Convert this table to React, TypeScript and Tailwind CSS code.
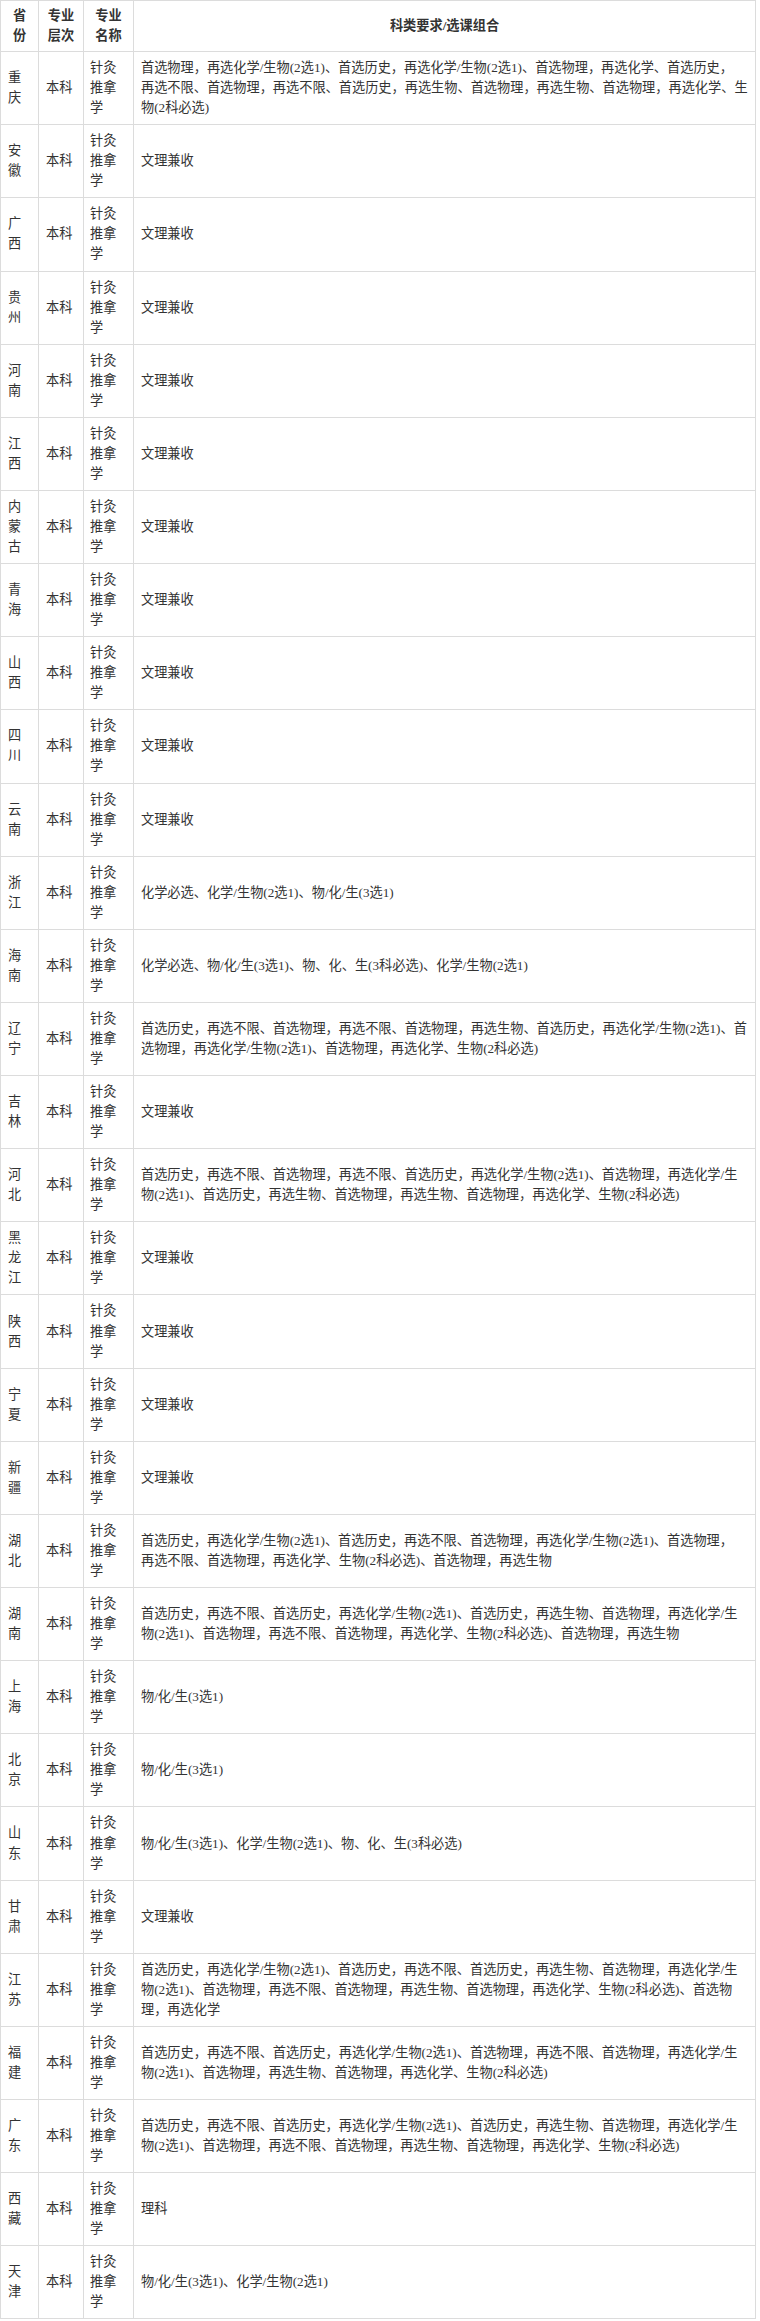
import React from "react";

interface Row {
  province: string;
  lines: string[];
}

const ALL = ["文理兼收"];

const rows: Row[] = [
  {
    province: "重庆",
    lines: [
      "首选物理，再选化学/生物(2选1)、首选历史，再选化学/生物(2选1)、首选物理，再选化学、首选历史，",
      "再选不限、首选物理，再选不限、首选历史，再选生物、首选物理，再选生物、首选物理，再选化学、生",
      "物(2科必选)",
    ],
  },
  { province: "安徽", lines: ALL },
  { province: "广西", lines: ALL },
  { province: "贵州", lines: ALL },
  { province: "河南", lines: ALL },
  { province: "江西", lines: ALL },
  { province: "内蒙古", lines: ALL },
  { province: "青海", lines: ALL },
  { province: "山西", lines: ALL },
  { province: "四川", lines: ALL },
  { province: "云南", lines: ALL },
  { province: "浙江", lines: ["化学必选、化学/生物(2选1)、物/化/生(3选1)"] },
  { province: "海南", lines: ["化学必选、物/化/生(3选1)、物、化、生(3科必选)、化学/生物(2选1)"] },
  {
    province: "辽宁",
    lines: [
      "首选历史，再选不限、首选物理，再选不限、首选物理，再选生物、首选历史，再选化学/生物(2选1)、首",
      "选物理，再选化学/生物(2选1)、首选物理，再选化学、生物(2科必选)",
    ],
  },
  { province: "吉林", lines: ALL },
  {
    province: "河北",
    lines: [
      "首选历史，再选不限、首选物理，再选不限、首选历史，再选化学/生物(2选1)、首选物理，再选化学/生",
      "物(2选1)、首选历史，再选生物、首选物理，再选生物、首选物理，再选化学、生物(2科必选)",
    ],
  },
  { province: "黑龙江", lines: ALL },
  { province: "陕西", lines: ALL },
  { province: "宁夏", lines: ALL },
  { province: "新疆", lines: ALL },
  {
    province: "湖北",
    lines: [
      "首选历史，再选化学/生物(2选1)、首选历史，再选不限、首选物理，再选化学/生物(2选1)、首选物理，",
      "再选不限、首选物理，再选化学、生物(2科必选)、首选物理，再选生物",
    ],
  },
  {
    province: "湖南",
    lines: [
      "首选历史，再选不限、首选历史，再选化学/生物(2选1)、首选历史，再选生物、首选物理，再选化学/生",
      "物(2选1)、首选物理，再选不限、首选物理，再选化学、生物(2科必选)、首选物理，再选生物",
    ],
  },
  { province: "上海", lines: ["物/化/生(3选1)"] },
  { province: "北京", lines: ["物/化/生(3选1)"] },
  { province: "山东", lines: ["物/化/生(3选1)、化学/生物(2选1)、物、化、生(3科必选)"] },
  { province: "甘肃", lines: ALL },
  {
    province: "江苏",
    lines: [
      "首选历史，再选化学/生物(2选1)、首选历史，再选不限、首选历史，再选生物、首选物理，再选化学/生",
      "物(2选1)、首选物理，再选不限、首选物理，再选生物、首选物理，再选化学、生物(2科必选)、首选物",
      "理，再选化学",
    ],
  },
  {
    province: "福建",
    lines: [
      "首选历史，再选不限、首选历史，再选化学/生物(2选1)、首选物理，再选不限、首选物理，再选化学/生",
      "物(2选1)、首选物理，再选生物、首选物理，再选化学、生物(2科必选)",
    ],
  },
  {
    province: "广东",
    lines: [
      "首选历史，再选不限、首选历史，再选化学/生物(2选1)、首选历史，再选生物、首选物理，再选化学/生",
      "物(2选1)、首选物理，再选不限、首选物理，再选生物、首选物理，再选化学、生物(2科必选)",
    ],
  },
  { province: "西藏", lines: ["理科"] },
  { province: "天津", lines: ["物/化/生(3选1)、化学/生物(2选1)"] },
];

export default function App() {
  return (
    <div className="bg-white w-[760px] min-h-[2321px]">
      <table className="w-[756px] table-fixed border-collapse text-[13.2px] leading-[20.05px] text-[#333] font-['Liberation_Serif','Noto_Sans_CJK_SC',serif]">
        <colgroup>
          <col className="w-[38px]" />
          <col className="w-[45px]" />
          <col className="w-[50px]" />
          <col />
        </colgroup>
        <thead>
          <tr>
            <th className="border border-[#dcdcdc] px-[7px] py-[5px] text-center font-bold">省份</th>
            <th className="border border-[#dcdcdc] px-[7px] py-[5px] text-center font-bold">专业层次</th>
            <th className="border border-[#dcdcdc] px-[6px] py-[5px] text-center font-bold">专业名称</th>
            <th className="border border-[#dcdcdc] px-[7px] py-[5px] text-center font-bold">科类要求/选课组合</th>
          </tr>
        </thead>
        <tbody>
          {rows.map((row) => (
            <tr key={row.province}>
              <td className="border border-[#dcdcdc] px-[7px] py-[6px] align-middle">{row.province}</td>
              <td className="border border-[#dcdcdc] px-[7px] py-[6px] align-middle">本科</td>
              <td className="border border-[#dcdcdc] pl-[6px] pr-[5px] py-[6px] align-middle">针灸推拿学</td>
              <td className="border border-[#dcdcdc] px-[7px] py-[6px] align-middle whitespace-nowrap">
                {row.lines.map((line, i) => (
                  <React.Fragment key={i}>
                    {i > 0 && <br />}
                    {line}
                  </React.Fragment>
                ))}
              </td>
            </tr>
          ))}
        </tbody>
      </table>
    </div>
  );
}
